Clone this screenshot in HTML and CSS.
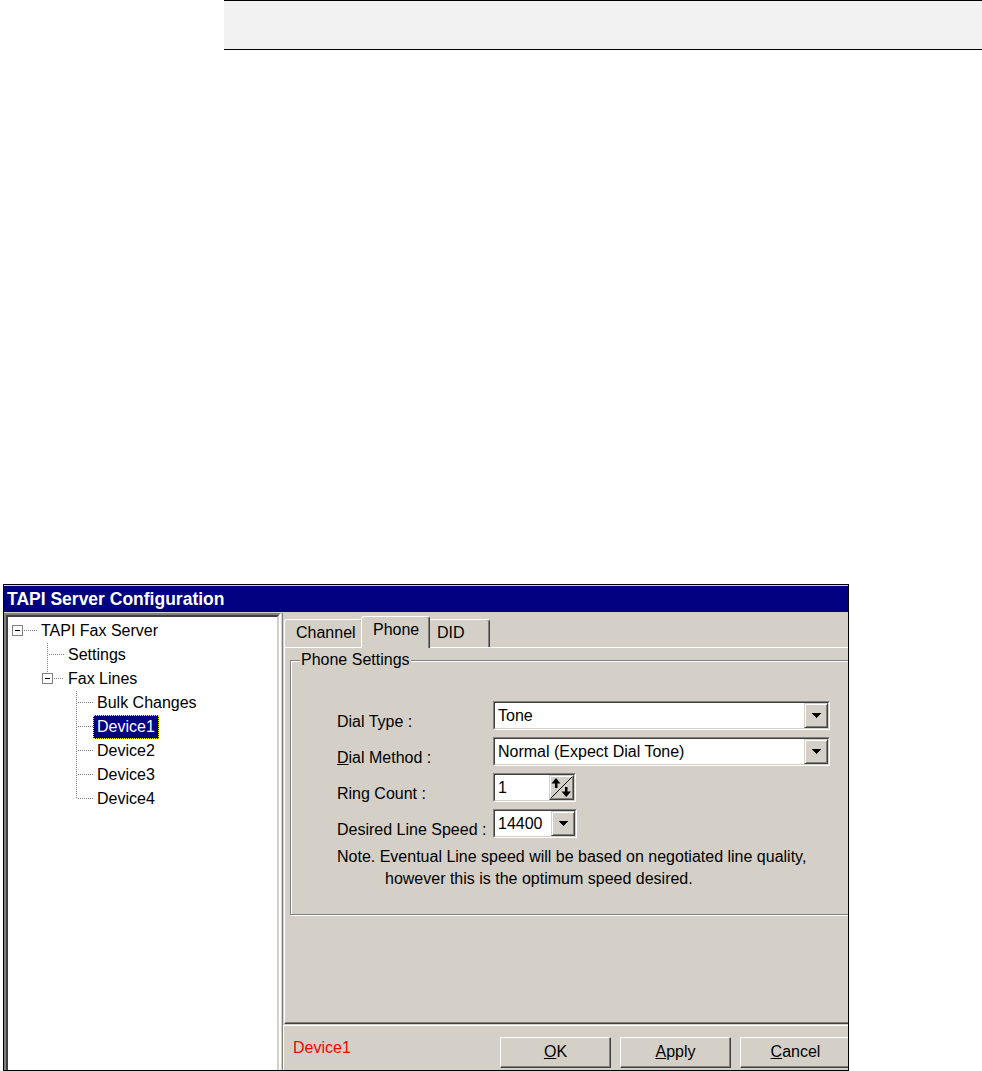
FILE: index.html
```html
<!DOCTYPE html>
<html>
<head>
<meta charset="utf-8">
<title>TAPI Server Configuration</title>
<link rel="stylesheet" href="styles.css">
</head>
<body>
<div class="docbar"></div>
<div class="window">
  <div class="titlebar">TAPI Server Configuration</div>
  <div class="body">
    <div class="tree-frame">
      <div class="tree">
        <div class="node">
          <svg class="gut" width="29" height="24" shape-rendering="crispEdges">
            <rect x="4.5" y="6.5" width="10" height="10" fill="#fff" stroke="#808080"/>
            <rect x="7" y="11" width="5" height="1" fill="#000"/>
            <line x1="16" y1="11.5" x2="29" y2="11.5" stroke="#808080" stroke-dasharray="1 1"/>
          </svg>
          <span class="label">TAPI Fax Server</span>
        </div>
        <div class="node">
          <svg class="gut" width="56" height="24" shape-rendering="crispEdges">
            <line x1="39.5" y1="0" x2="39.5" y2="24" stroke="#808080" stroke-dasharray="1 1"/>
            <line x1="41" y1="11.5" x2="56" y2="11.5" stroke="#808080" stroke-dasharray="1 1"/>
          </svg>
          <span class="label">Settings</span>
        </div>
        <div class="node">
          <svg class="gut" width="56" height="24" shape-rendering="crispEdges">
            <line x1="39.5" y1="0" x2="39.5" y2="6" stroke="#808080" stroke-dasharray="1 1"/>
            <rect x="34.5" y="6.5" width="10" height="10" fill="#fff" stroke="#808080"/>
            <rect x="37" y="11" width="5" height="1" fill="#000"/>
            <line x1="46" y1="11.5" x2="56" y2="11.5" stroke="#808080" stroke-dasharray="1 1"/>
          </svg>
          <span class="label">Fax Lines</span>
        </div>
        <div class="node">
          <svg class="gut" width="85" height="24" shape-rendering="crispEdges">
            <line x1="68.5" y1="0" x2="68.5" y2="24" stroke="#808080" stroke-dasharray="1 1"/>
            <line x1="70" y1="11.5" x2="85" y2="11.5" stroke="#808080" stroke-dasharray="1 1"/>
          </svg>
          <span class="label">Bulk Changes</span>
        </div>
        <div class="node">
          <svg class="gut" width="85" height="24" shape-rendering="crispEdges">
            <line x1="68.5" y1="0" x2="68.5" y2="24" stroke="#808080" stroke-dasharray="1 1"/>
            <line x1="70" y1="11.5" x2="85" y2="11.5" stroke="#808080" stroke-dasharray="1 1"/>
          </svg>
          <span class="label sel">Device1</span>
        </div>
        <div class="node">
          <svg class="gut" width="85" height="24" shape-rendering="crispEdges">
            <line x1="68.5" y1="0" x2="68.5" y2="24" stroke="#808080" stroke-dasharray="1 1"/>
            <line x1="70" y1="11.5" x2="85" y2="11.5" stroke="#808080" stroke-dasharray="1 1"/>
          </svg>
          <span class="label">Device2</span>
        </div>
        <div class="node">
          <svg class="gut" width="85" height="24" shape-rendering="crispEdges">
            <line x1="68.5" y1="0" x2="68.5" y2="24" stroke="#808080" stroke-dasharray="1 1"/>
            <line x1="70" y1="11.5" x2="85" y2="11.5" stroke="#808080" stroke-dasharray="1 1"/>
          </svg>
          <span class="label">Device3</span>
        </div>
        <div class="node">
          <svg class="gut" width="85" height="24" shape-rendering="crispEdges">
            <line x1="68.5" y1="0" x2="68.5" y2="12" stroke="#808080" stroke-dasharray="1 1"/>
            <line x1="70" y1="11.5" x2="85" y2="11.5" stroke="#808080" stroke-dasharray="1 1"/>
          </svg>
          <span class="label">Device4</span>
        </div>
      </div>
    </div>
    <div class="pane">
      <div class="tabs">
        <div class="tab channel">Channel</div>
        <div class="tab active">Phone</div>
        <div class="tab did">DID</div>
      </div>
      <div class="tabpanel">
        <div class="group">
          <div class="legend">Phone Settings</div>
          <div class="form">
            <div class="lbl">Dial Type :</div>
            <div class="combo w-long"><div class="combo-in">
              <div class="val">Tone</div>
              <div class="dd"><svg width="9" height="5" shape-rendering="crispEdges"><path d="M0 0h9v1H0zM1 1h7v1H1zM2 2h5v1H2zM3 3h3v1H3zM4 4h1v1H4z" fill="#000"/></svg></div>
            </div></div>
            <div class="lbl"><u>D</u>ial Method :</div>
            <div class="combo w-long"><div class="combo-in">
              <div class="val">Normal (Expect Dial Tone)</div>
              <div class="dd"><svg width="9" height="5" shape-rendering="crispEdges"><path d="M0 0h9v1H0zM1 1h7v1H1zM2 2h5v1H2zM3 3h3v1H3zM4 4h1v1H4z" fill="#000"/></svg></div>
            </div></div>
            <div class="lbl">Ring Count :</div>
            <div class="combo w-spin"><div class="combo-in">
              <div class="val">1</div>
              <div class="dd spinbtn"><svg width="23" height="23"><line x1="0.5" y1="22.5" x2="22.5" y2="0.5" stroke="#000"/><polygon points="6,2 1.5,7.5 10.5,7.5" fill="#000"/><rect x="5" y="7" width="2.5" height="5" fill="#000"/><rect x="15" y="11" width="2.5" height="5" fill="#000"/><polygon points="11.5,15.5 21,15.5 16.25,21" fill="#000"/></svg></div>
            </div></div>
            <div class="lbl">Desired Line Speed :</div>
            <div class="combo w-speed"><div class="combo-in">
              <div class="val">14400</div>
              <div class="dd"><svg width="9" height="5" shape-rendering="crispEdges"><path d="M0 0h9v1H0zM1 1h7v1H1zM2 2h5v1H2zM3 3h3v1H3zM4 4h1v1H4z" fill="#000"/></svg></div>
            </div></div>
          </div>
          <div class="note">
            <div>Note. Eventual Line speed will be based on negotiated line quality,</div>
            <div class="indent">however this is the optimum speed desired.</div>
          </div>
        </div>
      </div>
      <div class="status">
        <div class="status-text">Device1</div>
        <button class="btn"><u>O</u>K</button>
        <button class="btn"><u>A</u>pply</button>
        <button class="btn"><u>C</u>ancel</button>
      </div>
    </div>
  </div>
</div>
</body>
</html>
```
FILE: styles.css
```css
* { box-sizing: border-box; }

body {
  margin: 0;
  background: #fff;
  font-family: "Liberation Sans", Arial, sans-serif;
  font-size: 16px;
  color: #000;
}

.docbar {
  margin-left: 224px;
  width: 758px;
  height: 50px;
  background: #f2f2f2;
  border-top: 1px solid #000;
  border-bottom: 1px solid #000;
}

.window {
  margin: 534px 0 0 3px;
  width: 846px;
  height: 487px;
  border: 1px solid #000;
  background: #d4d0c8;
  padding-top: 1px;
  display: flex;
  flex-direction: column;
  overflow: hidden;
}

.titlebar {
  flex-shrink: 0;
  height: 26px;
  margin-bottom: 1px;
  background: #000080;
  color: #fff;
  font-weight: bold;
  font-size: 17.5px;
  line-height: 26px;
  padding-left: 3px;
  white-space: nowrap;
}

.body {
  flex: 1;
  display: flex;
  min-height: 0;
}

.tree-frame {
  width: 277px;
  flex-shrink: 0;
  height: calc(100% + 20px);
  border-style: solid;
  border-width: 2px;
  border-color: #808080 #fff #fff #808080;
}

.tree {
  height: 100%;
  background: #fff;
  border-style: solid;
  border-width: 2px;
  border-color: #404040 #d4d0c8 #d4d0c8 #404040;
  padding-top: 2px;
}

.node {
  display: flex;
  height: 24px;
}

.gut {
  flex-shrink: 0;
  display: block;
}

.label {
  height: 24px;
  line-height: 22px;
  padding: 0 3px;
  border: 1px solid transparent;
  white-space: nowrap;
}

.label.sel {
  background: #000080;
  color: #fff;
  border: 1px dotted #ffff00;
}

.pane {
  flex: 1;
  min-width: 0;
  margin-left: 1px;
  border-left: 1px solid #808080;
  padding-top: 3px;
  display: flex;
  flex-direction: column;
  overflow: hidden;
}

.tabs {
  flex-shrink: 0;
  display: flex;
  align-items: flex-end;
  height: 31px;
  padding-left: 1px;
}

.tab {
  flex-shrink: 0;
  height: 28px;
  border-top: 1px solid #fff;
  border-left: 1px solid #fff;
  border-right: 1px solid #404040;
  box-shadow: inset -1px 0 #808080;
  border-radius: 3px 3px 0 0;
  padding: 4px 0 0 11px;
  line-height: 18px;
  background: #d4d0c8;
  white-space: nowrap;
}

.tab.channel { width: 79px; }

.tab.active {
  width: 69px;
  height: 32px;
  margin: 0 -2px -1px -2px;
  position: relative;
  z-index: 1;
}

.tab.did {
  width: 62px;
  padding-left: 8px;
}

.tabpanel {
  flex: 1;
  min-height: 0;
  width: 700px;
  margin-left: 1px;
  border-top: 1px solid #fff;
  border-left: 1px solid #fff;
  border-bottom: 1px solid #404040;
  box-shadow: inset 0 -1px #808080;
  padding: 12px 0 0 5px;
}

.group {
  width: 640px;
  height: 255px;
  border: 1px solid #808080;
  box-shadow: inset 1px 1px #fff, 1px 1px #fff;
}

.legend {
  width: max-content;
  margin: -10px 0 0 9px;
  padding: 0 1px;
  background: #d4d0c8;
  line-height: 18px;
}

.form {
  display: grid;
  grid-template-columns: 156px max-content;
  grid-auto-rows: 29px;
  row-gap: 7px;
  margin: 32px 0 0 46px;
}

.lbl {
  padding-top: 12px;
  line-height: 18px;
  white-space: nowrap;
}

.combo {
  height: 29px;
  border: 1px solid;
  border-color: #808080 #fff #fff #808080;
}

.combo-in {
  height: 100%;
  display: flex;
  background: #fff;
  border: 1px solid;
  border-color: #404040 #d4d0c8 #d4d0c8 #404040;
}

.val {
  flex: 1;
  min-width: 0;
  padding-left: 3px;
  line-height: 25px;
  white-space: nowrap;
  overflow: hidden;
}

.dd {
  width: 24px;
  flex-shrink: 0;
  background: #d4d0c8;
  border: 1px solid;
  border-color: #d4d0c8 #404040 #404040 #d4d0c8;
  box-shadow: inset 1px 1px #fff, inset -1px -1px #808080;
  display: flex;
  align-items: center;
  justify-content: center;
}

.dd svg { display: block; }

.dd.spinbtn { width: 25px; }

.w-long { width: 337px; }
.w-spin { width: 83px; }
.w-speed { width: 84px; }

.note {
  margin: 8px 0 0 46px;
  line-height: 22px;
  white-space: nowrap;
}

.note .indent { padding-left: 48px; }

.status {
  flex-shrink: 0;
  width: 700px;
  height: 45px;
  margin-top: 1px;
  border-top: 1px solid #fff;
  border-left: 1px solid #fff;
  display: flex;
  align-items: flex-start;
  padding: 11px 0 0 9px;
}

.status-text {
  width: 207px;
  flex-shrink: 0;
  color: #ff0000;
  line-height: 18px;
  margin-top: 2px;
}

.btn {
  flex-shrink: 0;
  width: 111px;
  height: 31px;
  margin: 0 9px 0 0;
  padding: 0 0 2px 0;
  font: inherit;
  line-height: 27px;
  color: #000;
  background: #d4d0c8;
  border: 1px solid;
  border-color: #fff #404040 #404040 #fff;
  box-shadow: inset -1px -1px #808080;
  border-radius: 0;
}
```
